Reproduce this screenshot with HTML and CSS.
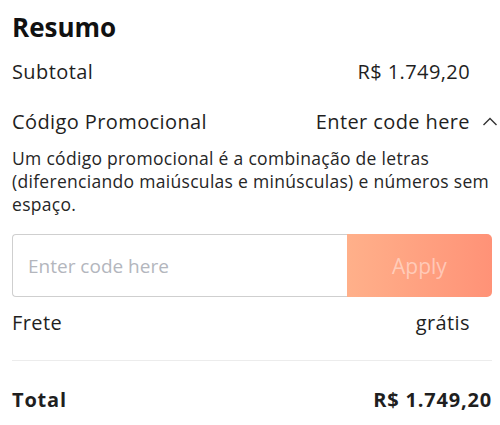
FILE: index.html
```html
<!DOCTYPE html>
<html lang="pt">
<head>
<meta charset="utf-8">
<link rel="stylesheet" href="styles.css">
</head>
<body>
<div class="summary">
  <h2 class="title">Resumo</h2>
  <div class="row subtotal">
    <span>Subtotal</span>
    <span class="value">R$ 1.749,20</span>
  </div>
  <div class="row promo-head">
    <span>Código Promocional</span>
    <span class="value promo-toggle">Enter code here
      <svg class="chev" width="16" height="10" viewBox="0 0 16 10"><path d="M1.5 9 L8 2.5 L14.5 9" fill="none" stroke="#333" stroke-width="1.4"/></svg>
    </span>
  </div>
  <p class="desc">Um código promocional é a combinação de letras (diferenciando maiúsculas e minúsculas) e números sem espaço.</p>
  <div class="promo-form">
    <input class="code-input" type="text" placeholder="Enter code here">
    <button class="apply">Apply</button>
  </div>
  <div class="row ship">
    <span>Frete</span>
    <span class="value">grátis</span>
  </div>
  <div class="divider"></div>
  <div class="row total">
    <span>Total</span>
    <span class="value-total">R$ 1.749,20</span>
  </div>
</div>
</body>
</html>
```
FILE: styles.css
```css
* { box-sizing: border-box; }
html, body { margin: 0; padding: 0; background: #fff; }
body {
  font-family: "Open Sans", "Noto Sans", sans-serif;
  color: #1f1f1f;
}
.summary {
  width: 480px;
  margin-left: 12px;
  padding-top: 10px;
}
.title {
  margin: 0;
  font-size: 26px;
  font-weight: 700;
  line-height: 34px;
  color: #111;
}
.row {
  display: flex;
  justify-content: space-between;
  align-items: center;
  font-size: 20px;
  line-height: 28px;
  letter-spacing: 0.4px;
  padding-right: 22px;
}
.subtotal { margin-top: 14px; }
.promo-head { margin-top: 22px; }
.promo-toggle { position: relative; }
.chev {
  position: absolute;
  left: calc(100% + 12px);
  top: 8px;
}
.desc {
  margin: 11px 0 0;
  font-size: 17.5px;
  line-height: 23px;
  letter-spacing: 0.3px;
  color: #262626;
}
.promo-form {
  display: flex;
  margin-top: 18px;
  height: 63px;
}
.code-input {
  flex: 0 0 335px;
  height: 100%;
  border: 1px solid #cfcfcf;
  border-right: none;
  border-radius: 4px 0 0 4px;
  padding: 0 15px;
  font-family: inherit;
  font-size: 19px;
  color: #333;
  outline: none;
}
.code-input::placeholder { color: #b3b6bd; }
.apply {
  flex: 1;
  height: 100%;
  border: none;
  border-radius: 0 5px 5px 0;
  background: linear-gradient(90deg, #ffb08a 0%, #ff9277 100%);
  color: rgba(255,255,255,0.45);
  font-family: inherit;
  font-size: 21px;
}
.ship { margin-top: 12px; }
.divider {
  height: 1px;
  background: #ececec;
  margin-top: 23px;
}
.total {
  margin-top: 25px;
  font-weight: 700;
  letter-spacing: 0.8px;
  padding-right: 0;
}
.value-total { font-weight: 700; }
```
